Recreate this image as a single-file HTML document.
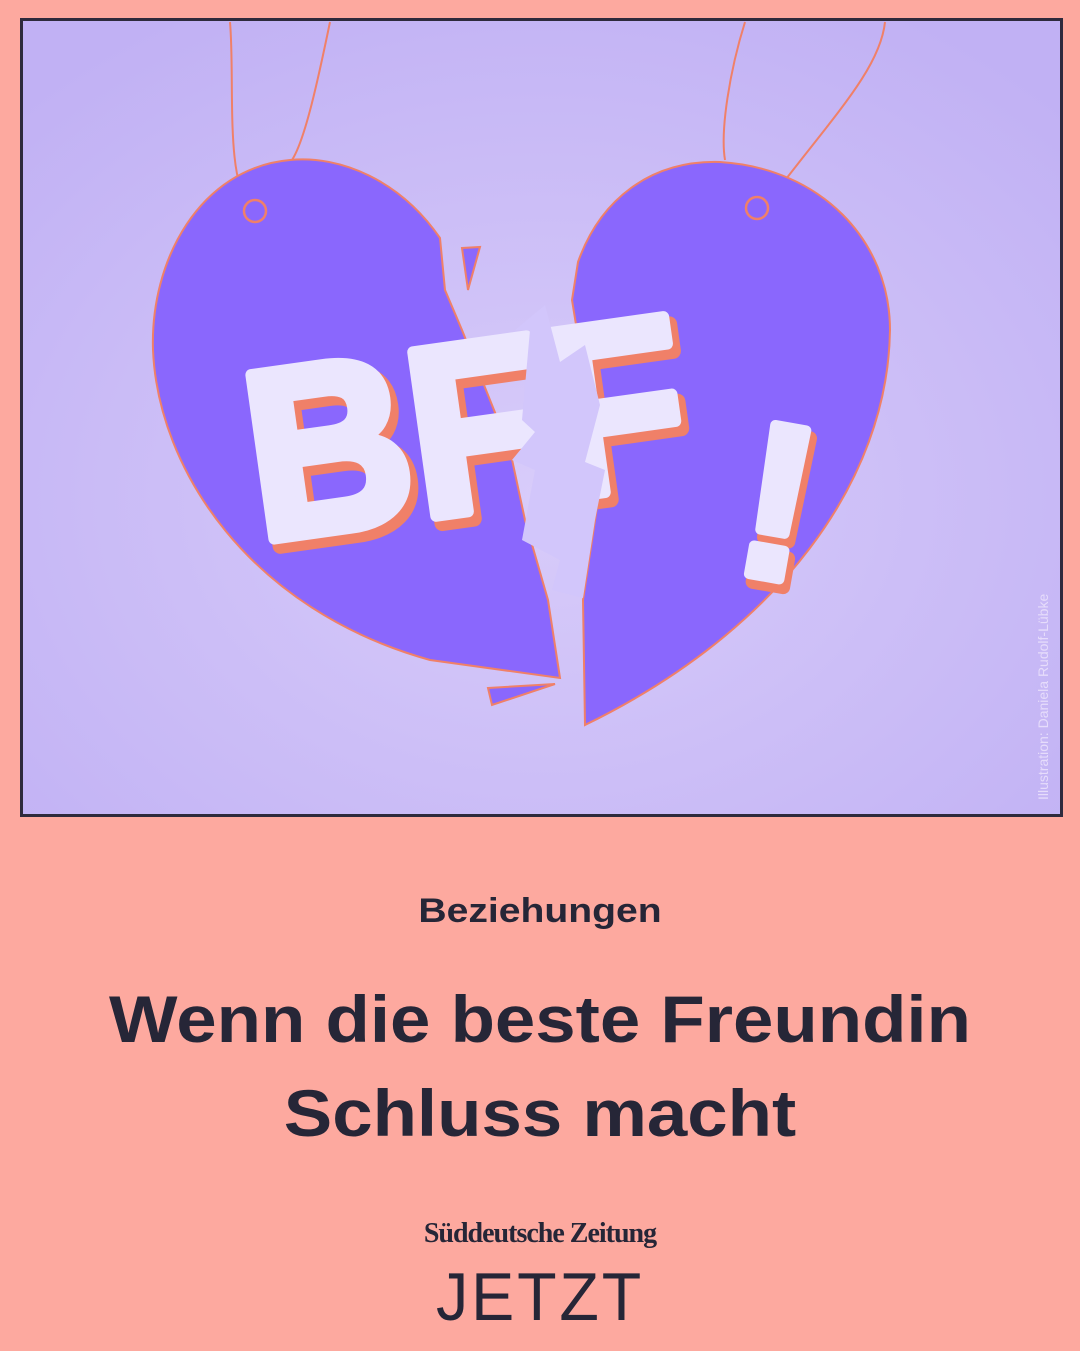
<!DOCTYPE html>
<html><head><meta charset="utf-8"><style>
body{margin:0;width:1080px;height:1351px;background:#fda99f;position:relative;overflow:hidden;font-family:"Liberation Sans",sans-serif;color:#262637}
.t{position:absolute;left:0;width:1080px;text-align:center;font-weight:bold}
</style></head><body>
<svg width="1080" height="830" style="position:absolute;left:0;top:0">
<defs><radialGradient id="g" cx="0.5" cy="0.6" r="0.7"><stop offset="0" stop-color="#d8ccfa"/><stop offset="1" stop-color="#c1b1f4"/></radialGradient></defs>
<rect x="21.5" y="19.5" width="1040" height="796" fill="url(#g)" stroke="#2e2a3c" stroke-width="3"/>
<g fill="none" stroke="#f08068" stroke-width="2">
<path d="M230,22 C235,80 225,180 250,205"/><path d="M330,22 C318,80 305,140 292,160"/>
<path d="M745,22 C730,70 720,130 725,160"/><path d="M885,22 C880,70 830,120 770,200"/>
</g>
<path d="M440,238 C400,180 340,155 290,160 C200,168 150,260 153,350 C158,470 250,610 430,660 L560,678 L548,600 L525,520 L510,450 L462,330 L445,290 Z" fill="#8a67fd" stroke="#f08068" stroke-width="2"/>
<path d="M578,262 C600,200 650,160 720,162 C820,168 890,240 890,330 C888,480 780,630 585,725 L583,600 L598,500 L585,380 L572,300 Z" fill="#8a67fd" stroke="#f08068" stroke-width="2"/>
<circle cx="255" cy="211" r="11" fill="none" stroke="#f08068" stroke-width="2.5"/>
<circle cx="757" cy="208" r="11" fill="none" stroke="#f08068" stroke-width="2.5"/>
<path d="M462,248 L480,247 L468,290 Z M488,688 L555,684 L492,705 Z" fill="#8a67fd" stroke="#f08068" stroke-width="2"/>
<g font-family="Liberation Sans" font-weight="bold" transform="rotate(-8 400 430)">
<text x="250" y="528" font-size="240" fill="#f08068" stroke="#f08068" stroke-width="16" stroke-linejoin="round" textLength="440" lengthAdjust="spacingAndGlyphs">BFF</text>
<text x="245" y="520" font-size="240" fill="#ebe6fe" stroke="#ebe6fe" stroke-width="12" stroke-linejoin="round" textLength="440" lengthAdjust="spacingAndGlyphs">BFF</text>
</g>
<g font-family="Liberation Sans" font-weight="bold" transform="rotate(10 780 480)">
<text x="750" y="585" font-size="220" fill="#f08068" stroke="#f08068" stroke-width="14" stroke-linejoin="round">!</text>
<text x="745" y="578" font-size="220" fill="#ebe6fe" stroke="#ebe6fe" stroke-width="10" stroke-linejoin="round">!</text>
</g>
<path d="M515,330 L530,330 L522,420 L535,432 L512,460 L535,470 L522,540 L560,560 L552,590 L583,598 L595,520 L605,470 L585,462 L600,405 L585,345 L560,362 L545,305 Z" fill="#d2c6fb"/>
<text x="1048" y="800" font-size="14" fill="#e6dcfb" transform="rotate(-90 1048 800)">Illustration: Daniela Rudolf-Lübke</text>
</svg>
<div class="t" style="top:892px;font-size:34px;transform:scaleX(1.15)">Beziehungen</div>
<div class="t" style="top:972px;font-size:66px;line-height:94px;transform:scaleX(1.1)">Wenn die beste Freundin<br>Schluss macht</div>
<div class="t" style="top:1218px;font-size:28px;font-family:'Liberation Serif',serif;letter-spacing:-1px">Süddeutsche Zeitung</div>
<div class="t" style="top:1258px;font-size:68px;font-weight:normal;letter-spacing:3px;transform:scaleX(0.95)">JETZT</div>
</body></html>
